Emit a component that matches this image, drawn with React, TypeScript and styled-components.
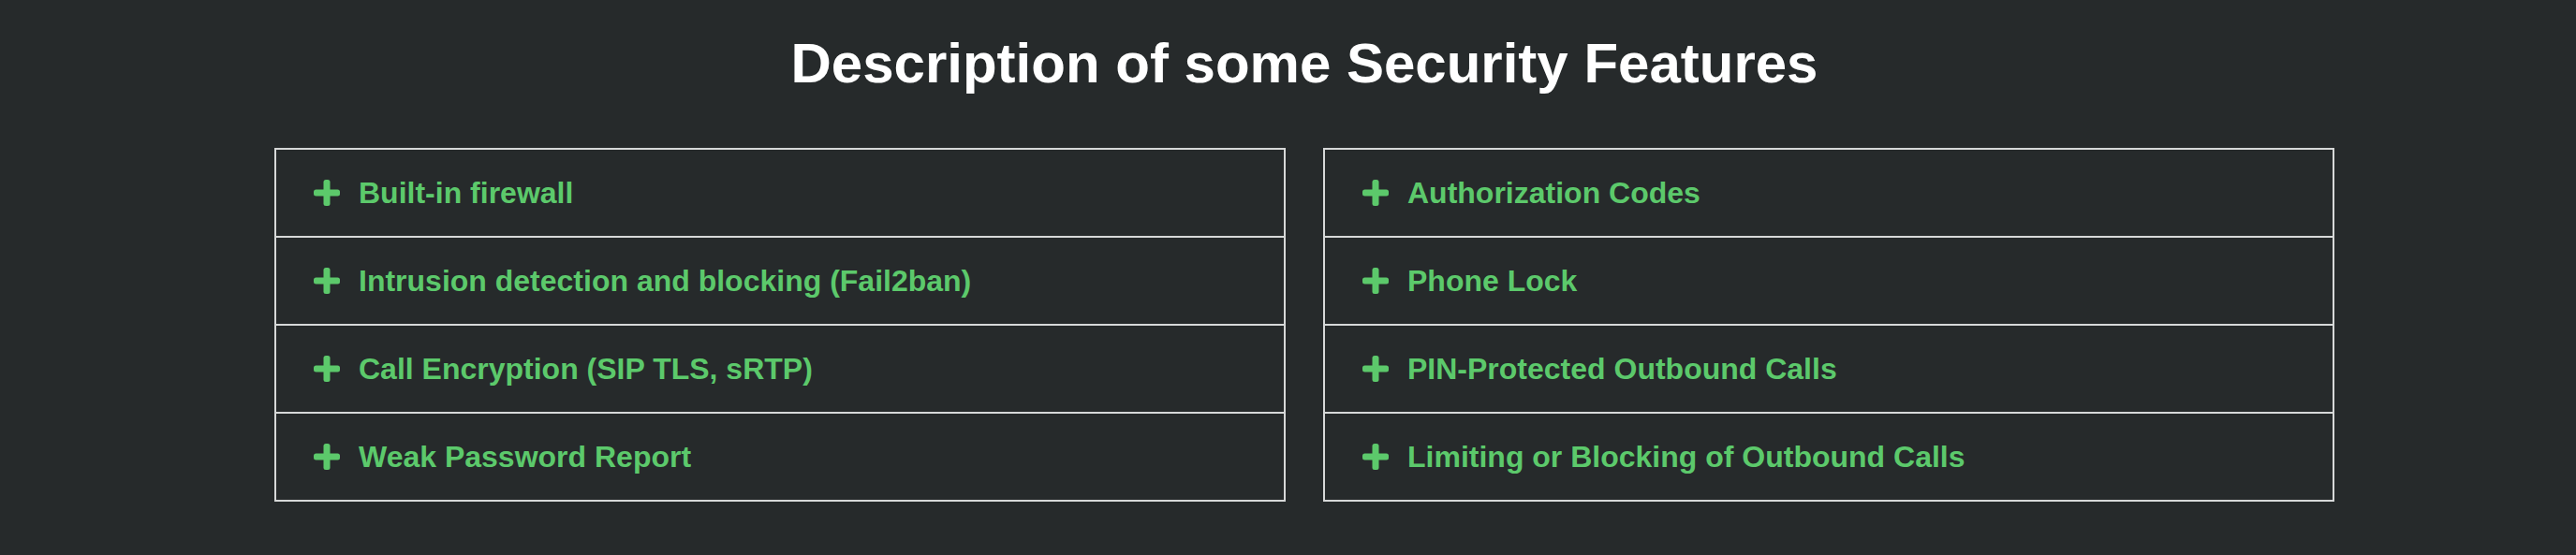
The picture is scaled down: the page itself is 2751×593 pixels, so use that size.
import React from 'react';
import styled, { createGlobalStyle } from 'styled-components';

const GlobalStyle = createGlobalStyle`
  html, body {
    margin: 0;
    padding: 0;
    background-color: #262a2b;
  }

  body {
    font-family: "Liberation Sans", Arial, sans-serif;
  }
`;

const Page = styled.div`
  min-height: 593px;
  background-color: #262a2b;
  padding-left: 293px;
  box-sizing: border-box;
`;

const Section = styled.section`
  width: 2200px;
`;

const Heading = styled.h1`
  margin: 0 0 57px;
  padding-top: 34px;
  font-size: 60px;
  line-height: 67px;
  font-weight: 700;
  color: #ffffff;
  text-align: center;
`;

const Columns = styled.div`
  display: grid;
  grid-template-columns: 1080px 1080px;
  column-gap: 40px;
`;

const FeatureList = styled.ul`
  list-style: none;
  margin: 0;
  padding: 0;
  border: 2px solid #d6d8d8;
`;

const FeatureItem = styled.li`
  display: flex;
  align-items: center;
  gap: 20px;
  height: 92px;
  padding-left: 40px;
  cursor: pointer;

  & + & {
    border-top: 2px solid #d6d8d8;
  }
`;

const FeatureTitle = styled.span`
  font-size: 32px;
  font-weight: 700;
  color: #5cc96b;
`;

const PlusIcon = () => (
  <svg width="28" height="28" viewBox="0 0 28 28" aria-hidden="true">
    <rect x="10.5" y="0" width="7" height="28" rx="2.5" fill="#5cc96b" />
    <rect x="0" y="10.5" width="28" height="7" rx="2.5" fill="#5cc96b" />
  </svg>
);

const leftFeatures = [
  'Built-in firewall',
  'Intrusion detection and blocking (Fail2ban)',
  'Call Encryption (SIP TLS, sRTP)',
  'Weak Password Report',
];

const rightFeatures = [
  'Authorization Codes',
  'Phone Lock',
  'PIN-Protected Outbound Calls',
  'Limiting or Blocking of Outbound Calls',
];

const Features: React.FC<{ items: string[] }> = ({ items }) => (
  <FeatureList>
    {items.map((item) => (
      <FeatureItem key={item}>
        <PlusIcon />
        <FeatureTitle>{item}</FeatureTitle>
      </FeatureItem>
    ))}
  </FeatureList>
);

const App: React.FC = () => (
  <>
    <GlobalStyle />
    <Page>
      <Section>
        <Heading>Description of some Security Features</Heading>
        <Columns>
          <Features items={leftFeatures} />
          <Features items={rightFeatures} />
        </Columns>
      </Section>
    </Page>
  </>
);

export default App;
